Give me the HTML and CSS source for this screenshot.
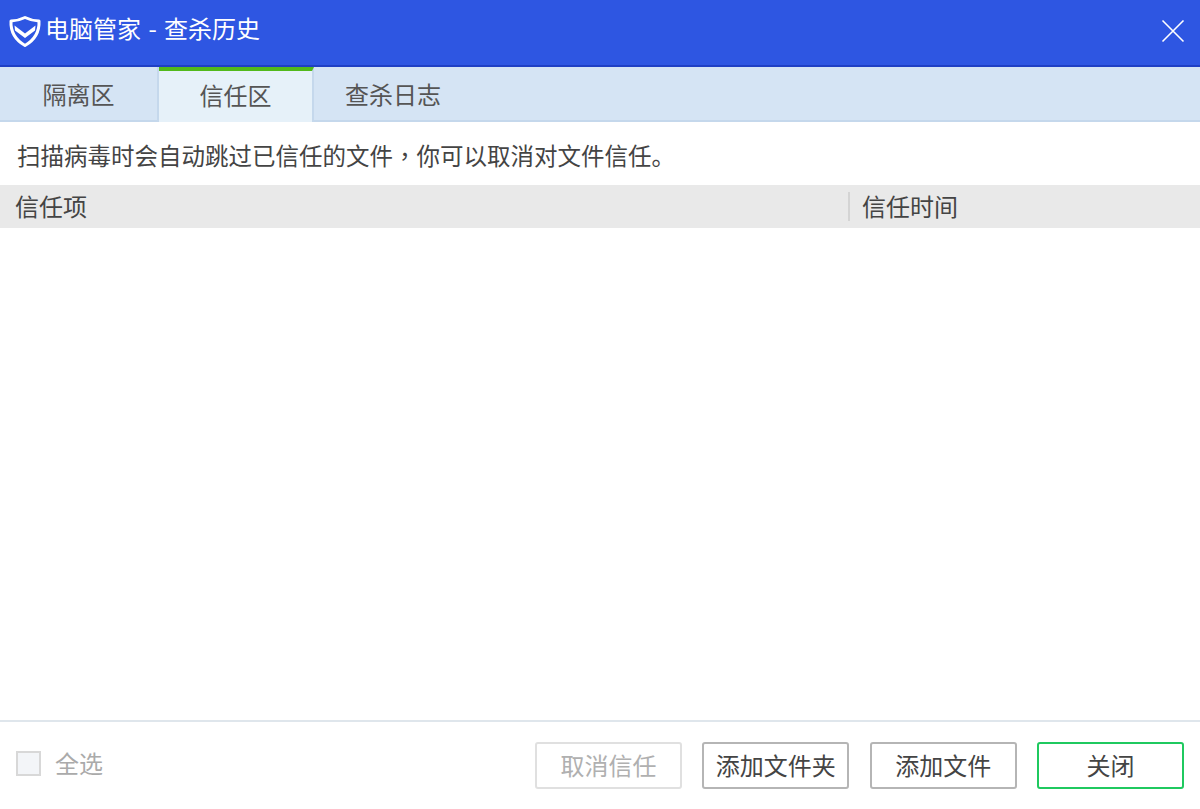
FILE: index.html
```html
<!DOCTYPE html>
<html lang="zh-CN">
<head>
<meta charset="utf-8">
<title>电脑管家 - 查杀历史</title>
<link rel="stylesheet" href="styles.css">
</head>
<body>
<div class="window">
  <header class="titlebar">
    <div class="brand">
      <svg class="logo" width="34" height="34" viewBox="0 0 34 34" aria-hidden="true">
        <path d="M17 3.500 C21 5.500 26 6.800 31 7 C31.500 17 26.500 26 17 31.500 C7.500 26 2.500 17 3 7 C8 6.800 13 5.500 17 3.500 Z" fill="none" stroke="#fff" stroke-width="3" stroke-linejoin="round"/>
        <path d="M6.500 11.500 L17 19.500 L27.500 11.500 L27 16.500 L17 24 L7 16.500 Z" fill="#fff"/>
      </svg>
      <span class="title">电脑管家 - 查杀历史</span>
    </div>
    <button class="close" aria-label="关闭">
      <svg width="24" height="24" viewBox="0 0 24 24" aria-hidden="true"><path d="M1.500 1.500 L22.500 22.500 M22.500 1.500 L1.500 22.500" stroke="#fff" stroke-width="1.600" fill="none"/></svg>
    </button>
  </header>
  <nav class="tabs">
    <div class="tab tab-first">隔离区</div>
    <div class="tab tab-active">信任区</div>
    <div class="tab tab-last">查杀日志</div>
  </nav>
  <p class="hint">扫描病毒时会自动跳过已信任的文件<span class="comma" lang="zh-TW">，</span>你可以取消对文件信任。</p>
  <div class="thead">
    <div class="col-item">信任项</div>
    <div class="col-time">信任时间</div>
  </div>
  <main class="tbody"></main>
  <footer class="footer">
    <label class="selectall"><span class="checkbox"></span><span>全选</span></label>
    <div class="actions">
      <button class="btn btn-disabled">取消信任</button>
      <button class="btn">添加文件夹</button>
      <button class="btn">添加文件</button>
      <button class="btn btn-primary">关闭</button>
    </div>
  </footer>
</div>
</body>
</html>
```
FILE: styles.css
```css
* { box-sizing: border-box; }
html, body { margin: 0; padding: 0; height: 100%; background: #fff; }
body { font-family: "Noto Sans CJK SC", "Liberation Sans", sans-serif; overflow: hidden; }
.window { width: 1200px; height: 809px; display: flex; flex-direction: column; }
.titlebar {
  height: 67px; background: #2e56e2; border-bottom: 2px solid #1f3fc4;
  display: flex; align-items: center; justify-content: space-between;
  padding: 0 15px 7px 8px; flex: none;
}
.brand { display: flex; align-items: center; gap: 3px; }
.logo { display: block; margin-top: 3px; }
.title { color: #fff; font-size: 24px; line-height: 30px; word-spacing: 2px; margin-bottom: 3px; }
.close { width: 24px; height: 24px; padding: 0; background: none; border: 0; display: block; margin-top: 3px; }
.close svg { display: block; }
.tabs {
  height: 55px; background: #d5e4f4; border-bottom: 2px solid #c5d8ec;
  display: flex; flex: none;
}
.tab { font-size: 24px; color: #555; display: flex; align-items: center; justify-content: center; height: 53px; padding-bottom: 0; }
.tab-first { width: 159px; border-right: 2px solid #c5d8ec; }
.tab-active { width: 155px; background: #e6f1f9; border-top: 4px solid #52b91c; border-right: 2px solid #c5d8ec; height: 55px; padding-bottom: 5px; }
.tab-last { width: 158px; }
.hint { margin: 0; height: 63px; padding: 14px 0 0 17px; font-size: 23.5px; line-height: 38px; color: #444; flex: none; white-space: nowrap; }
.comma { font-family: "Noto Sans CJK TC", sans-serif; }
.thead { height: 43px; background: #e9e9e9; display: flex; align-items: center; flex: none; font-size: 24px; color: #444; padding-bottom: 3px; }
.col-item { width: 848px; padding-left: 15px; }
.col-time { flex: 1; padding-left: 12px; border-left: 2px solid #d4d4d4; height: 29px; line-height: 27px; margin-top: 3px; }
.tbody { flex: 1; }
.footer {
  height: 89px; border-top: 2px solid #dfe6ec; flex: none;
  display: flex; align-items: flex-start; justify-content: space-between;
  padding: 20px 16px 0 16px;
}
.selectall { display: flex; align-items: center; gap: 14px; font-size: 24px; color: #aaa; height: 47px; margin-top: -3px; }
.checkbox { width: 25px; height: 25px; border: 2px solid #d8d8d8; background: #f3f5f8; display: block; margin-top: 2px; }
.actions { display: flex; gap: 20.33px; }
.btn {
  width: 147px; height: 47px; background: #fff; border: 2px solid #b5b5b5; border-radius: 3px;
  font: inherit; font-size: 24px; color: #444; padding: 0 0 3px;
}
.btn-disabled { border-color: #e0e0e0; color: #b0b0b0; }
.btn-primary { border-color: #1fc95f; }
```
